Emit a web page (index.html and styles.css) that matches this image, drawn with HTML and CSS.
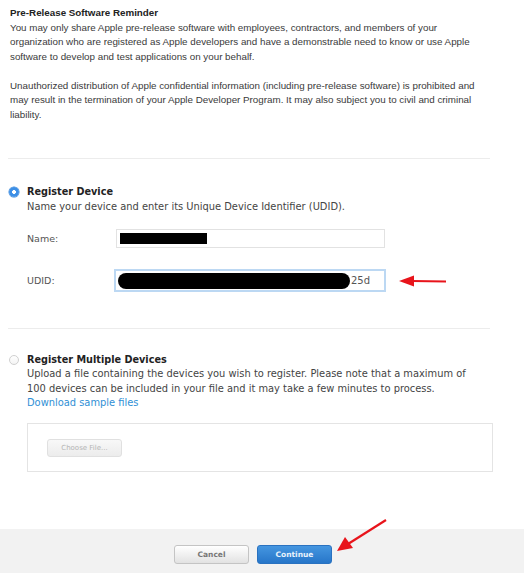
FILE: index.html
```html
<!DOCTYPE html>
<html>
<head>
<meta charset="utf-8">
<link rel="stylesheet" href="styles.css">
</head>
<body>
<div class="page">
  <div class="main">
    <section class="reminder">
      <h2 class="reminder-title">Pre-Release Software Reminder</h2>
      <p>You may only share Apple pre-release software with employees, contractors, and members of your organization who are registered as Apple developers and have a demonstrable need to know or use Apple software to develop and test applications on your behalf.</p>
      <p>Unauthorized distribution of Apple confidential information (including pre-release software) is prohibited and may result in the termination of your Apple Developer Program. It may also subject you to civil and criminal liability.</p>
    </section>

    <div class="sep sep-first"></div>

    <section class="option option-single">
      <span class="radio radio-on"></span>
      <div class="option-body">
        <h3 class="option-title">Register Device</h3>
        <p class="option-desc">Name your device and enter its Unique Device Identifier (UDID).</p>
        <div class="field field-name">
          <label class="field-label">Name:</label>
          <div class="input"><span class="redact redact-name"></span></div>
        </div>
        <div class="field field-udid">
          <label class="field-label">UDID:</label>
          <div class="input input-focus"><span class="redact redact-udid"></span><span class="udid-tail">25d</span></div>
          <svg class="arrow-left" width="50" height="14" viewBox="0 0 50 14">
            <line x1="14" y1="7" x2="48" y2="7.5" stroke="#e8141b" stroke-width="2.2"/>
            <polygon points="1,7 16,1.5 16,12.5" fill="#e8141b"/>
          </svg>
        </div>
      </div>
    </section>

    <div class="sep sep-second"></div>

    <section class="option option-multi">
      <span class="radio radio-off"></span>
      <div class="option-body">
        <h3 class="option-title">Register Multiple Devices</h3>
        <p class="option-desc">Upload a file containing the devices you wish to register. Please note that a maximum of 100 devices can be included in your file and it may take a few minutes to process.</p>
        <a class="link" href="#">Download sample files</a>
        <div class="file-box">
          <button class="btn-file" type="button">Choose File...</button>
        </div>
      </div>
    </section>
  </div>

  <footer class="footer">
    <button class="btn btn-cancel" type="button">Cancel</button>
    <button class="btn btn-continue" type="button">Continue</button>
    <svg class="arrow-diag" width="52" height="34" viewBox="0 0 52 34">
      <line x1="50" y1="1" x2="12" y2="25" stroke="#e8141b" stroke-width="2.2"/>
      <polygon points="1,32 9,18 17,29" fill="#e8141b"/>
    </svg>
  </footer>
</div>
</body>
</html>
```

FILE: styles.css
```css
* { box-sizing: border-box; }

html, body {
  margin: 0;
  padding: 0;
  background: #ffffff;
}

body {
  font-family: "DejaVu Sans", "Liberation Sans", sans-serif;
  color: #333;
}

.page {
  width: 524px;
  height: 573px;
  display: flex;
  flex-direction: column;
}

.main {
  flex: 1;
  padding-right: 31px;
}

.reminder {
  padding: 6px 0 0 10px;
  max-width: 480px;
  font-family: "Liberation Sans", Arial, sans-serif;
  font-size: 9.8px;
  line-height: 14.5px;
  color: #3a3a3a;
}

.reminder-title {
  margin: 0;
  font-size: 9.8px;
  font-weight: bold;
  color: #222;
  line-height: 14.5px;
}

.reminder p {
  margin: 0 0 14.5px 0;
}

.reminder p:last-child { margin-bottom: 0; }

.sep {
  height: 1px;
  background: #ececec;
  margin-left: 8px;
  margin-right: 3px;
}

.sep-first { margin-top: 36px; }
.sep-second { margin-top: 36px; }

.option {
  display: flex;
  align-items: flex-start;
  padding-left: 9px;
}

.option-single { margin-top: 25px; }
.option-multi { margin-top: 23px; }

.radio {
  flex: none;
  width: 10px;
  height: 10px;
  border-radius: 50%;
  margin-top: 3px;
  margin-right: 8px;
}

.radio-on {
  background: radial-gradient(circle, #ffffff 0 1.6px, #3d8fe6 2.2px);
  box-shadow: 0 0 0 0.5px #2e7fd6;
}

.radio-off {
  border: 1px solid #d0d0d0;
  background: linear-gradient(#ffffff, #f4f4f4);
}

.option-body {
  flex: 1;
}

.option-title {
  margin: 0;
  font-size: 9.7px;
  font-weight: bold;
  color: #222;
  line-height: 15px;
}

.option-desc {
  margin: 0;
  max-width: 452px;
  font-size: 9.9px;
  line-height: 14.5px;
  color: #444;
}

.option-single .option-desc { line-height: 15px; }

.field {
  display: flex;
  align-items: center;
}

.field-name { margin-top: 15px; }
.field-udid { margin-top: 21px; }

.field-label {
  width: 89px;
  font-size: 9.5px;
  color: #555;
}

.field-udid .field-label { width: 87px; }

.input {
  width: 269px;
  height: 19px;
  border: 1px solid #e2e2e2;
  background: #fff;
  display: flex;
  align-items: center;
  padding-left: 3px;
}

.input-focus {
  width: 272px;
  height: 23px;
  border: 2px solid #bcd8f3;
  padding-left: 2px;
}

.redact {
  display: block;
  background: #000;
}

.redact-name {
  width: 87px;
  height: 11px;
}

.redact-udid {
  width: 232px;
  height: 16px;
  border-radius: 8px;
}

.udid-tail {
  font-size: 10px;
  color: #555;
  margin-left: 1px;
}

.arrow-left {
  margin-left: 12px;
}

.link {
  display: block;
  font-size: 9.9px;
  line-height: 14.5px;
  color: #2f8fd5;
  text-decoration: none;
}

.file-box {
  margin-top: 12px;
  height: 49px;
  border: 1px solid #e4e4e4;
  padding: 15px 0 0 19px;
  margin-right: 0;
}

.btn-file {
  display: block;
  width: 75px;
  height: 18px;
  border: 1px solid #e0e0e0;
  border-radius: 3px;
  background: linear-gradient(#f8f8f8, #ececec);
  font-family: "DejaVu Sans", sans-serif;
  font-size: 7px;
  color: #b5b5b5;
  padding: 0;
}

.footer {
  position: relative;
  height: 44px;
  background: #f2f2f2;
  display: flex;
  justify-content: center;
  align-items: flex-start;
  gap: 8px;
  padding-top: 16px;
  padding-right: 18px;
}

.btn {
  width: 75px;
  height: 19px;
  border-radius: 3px;
  font-family: "DejaVu Sans", sans-serif;
  font-size: 7.5px;
  font-weight: bold;
  padding: 0;
}

.btn-cancel {
  border: 1px solid #c4c4c4;
  background: linear-gradient(#ffffff, #e2e2e2);
  color: #777;
}

.btn-continue {
  border: 1px solid #2a72c0;
  background: linear-gradient(#4596e0, #2776c9);
  color: #e8f2fc;
}

.arrow-diag {
  position: absolute;
  left: 336px;
  top: -10px;
}
```
